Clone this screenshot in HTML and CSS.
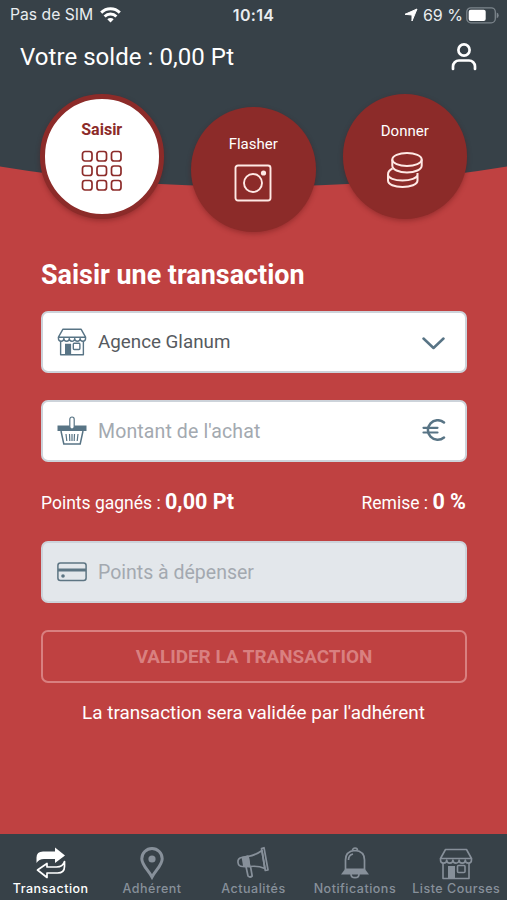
FILE: index.html
```html
<!DOCTYPE html>
<html lang="fr">
<head>
<meta charset="utf-8">
<meta name="viewport" content="width=device-width, initial-scale=1">
<title>Saisir une transaction</title>
<link rel="stylesheet" href="styles.css">
</head>
<body>
<svg class="defs" width="0" height="0" aria-hidden="true">
  <symbol id="shop" viewBox="0 0 34 32">
    <g fill="none" stroke="currentColor" stroke-width="1.600" stroke-linejoin="round">
      <path d="M6.500 1.500h21l5 9h-31z"/>
      <path d="M1.500 10.500v1.500a3.100 3.100 0 0 0 6.200 0a3.100 3.100 0 0 0 6.200 0a3.100 3.100 0 0 0 6.200 0a3.100 3.100 0 0 0 6.200 0a3.100 3.100 0 0 0 6.200 0v-1.500"/>
      <path d="M4 15v15.500h26V15"/>
      <rect x="18.500" y="17.500" width="7.500" height="7" rx="1"/>
    </g>
    <path d="M9 18h7v12H9z" fill="currentColor"/>
  </symbol>
</svg>
<div class="app">
  <header class="top">
    <div class="status">
      <div class="carrier"><span>Pas de SIM</span>
        <svg width="21" height="16" viewBox="0 0 21 16" fill="none" stroke="#fff" stroke-width="2.900"><path d="M1.200 5.600a13.200 13.200 0 0 1 18.600 0M4.600 9.400a8.300 8.300 0 0 1 11.800 0"/><path d="M10.500 15.500L7.300 12.300a4.500 4.500 0 0 1 6.400 0z" fill="#fff" stroke="none"/></svg>
      </div>
      <div class="clock">10:14</div>
      <div class="power">
        <svg width="14" height="14" viewBox="0 0 14 14"><path d="M13 1L8 13V7L1 6.300z" fill="#fff" stroke="#fff" stroke-linejoin="round"/></svg>
        <span>69 %</span>
        <svg width="33" height="17" viewBox="0 0 33 17"><rect x=".8" y=".8" width="28.500" height="15" rx="4" fill="none" stroke="#7c858c" stroke-width="1.300"/><rect x="2.700" y="2.700" width="17" height="11.200" rx="2" fill="#fff"/><path d="M30.700 5.500q2 .8 2 2.900t-2 2.900z" fill="#7c858c"/></svg>
      </div>
    </div>
    <div class="balance">
      <h1>Votre solde : 0,00 Pt</h1>
      <svg width="28" height="30" viewBox="0 0 28 30" fill="none" stroke="#fff" stroke-width="2.700" stroke-linecap="round"><circle cx="14" cy="8" r="5.600"/><path d="M3 27v-2.500a6 6 0 0 1 6-6h10a6 6 0 0 1 6 6V27"/></svg>
    </div>
  </header>

  <section class="modes">
    <svg class="curve" viewBox="0 0 507 22" preserveAspectRatio="none"><path d="M0 0V1.500Q120 21.500 253.500 21.500T507 1.500V0z" fill="#374148"/></svg>
    <button class="mode active"><span>Saisir</span>
      <svg width="42" height="42" viewBox="0 0 42 42" fill="none" stroke="#8c2b29" stroke-width="1.700"><rect x="1.500" y="1.500" width="9.500" height="9.500" rx="2.500"/><rect x="16" y="1.500" width="9.500" height="9.500" rx="2.500"/><rect x="30.500" y="1.500" width="9.500" height="9.500" rx="2.500"/><rect x="1.500" y="16" width="9.500" height="9.500" rx="2.500"/><rect x="16" y="16" width="9.500" height="9.500" rx="2.500"/><rect x="30.500" y="16" width="9.500" height="9.500" rx="2.500"/><rect x="1.500" y="30.500" width="9.500" height="9.500" rx="2.500"/><rect x="16" y="30.500" width="9.500" height="9.500" rx="2.500"/><rect x="30.500" y="30.500" width="9.500" height="9.500" rx="2.500"/></svg>
    </button>
    <button class="mode low"><span>Flasher</span>
      <svg width="38" height="38" viewBox="0 0 38 38" fill="none" stroke="#ffe9e5" stroke-width="1.900"><rect x="1.500" y="1.500" width="35" height="35" rx="2.500"/><circle cx="19" cy="19" r="9"/><circle cx="29.500" cy="9" r="2.600" fill="#ffe9e5" stroke="none"/></svg>
    </button>
    <button class="mode"><span>Donner</span>
      <svg width="38" height="38" viewBox="0 0 38 38" fill="none" stroke="#ffe9e5" stroke-width="2"><path d="M6.500 17.500C3.500 19 2 21 2 23.500c0 3.500 6.500 6 14.500 6s15-2.500 15-6V22M2 23.500v6c0 4 6.500 6.500 14.500 6.500s15-2.500 15-6.500v-6"/><ellipse cx="21" cy="8.500" rx="14.700" ry="6.500"/><path d="M6.300 8.500v6c0 4 6.500 7 14.700 7s14.700-3 14.700-7v-6"/></svg>
    </button>
  </section>

  <main class="form">
    <h2>Saisir une transaction</h2>
    <div class="field">
      <svg class="lead" width="30" height="28"><use href="#shop"/></svg>
      <span class="value">Agence Glanum</span>
      <svg width="24" height="24" viewBox="0 0 24 24" fill="none" stroke="#587485" stroke-width="2.500" stroke-linecap="round" stroke-linejoin="round"><path d="M1.500 8.500l10 9.500L21.500 8.500"/></svg>
    </div>
    <div class="field">
      <svg class="lead" width="30" height="30" viewBox="0 0 30 30"><path d="M.5 9.500h29v5.500H.5z" fill="#587485"/><path d="M4 15l2.800 13h16.400L26 15" fill="#fff" stroke="#587485" stroke-width="1.500"/><path d="M9 18l.8 7M12.500 18l.3 7M15 18v7M17.500 18l-.3 7M21 18l-.8 7" stroke="#587485" stroke-width="1.200"/><rect x="12.800" y="1" width="4.400" height="12" rx="2.200" fill="#fff" stroke="#587485" stroke-width="1.200"/></svg>
      <span class="value hint amount">Montant de l'achat</span>
      <svg width="24" height="24" viewBox="0 0 24 24" fill="none" stroke="#587485" stroke-width="2.500" stroke-linecap="round"><path d="M22 3.500A9.800 9.800 0 1 0 22 18.500"/><path d="M1.500 8.800H15.500M1.500 13.500H15.500" stroke-width="2.200"/></svg>
    </div>
    <div class="totals">
      <div>Points gagnés : <b>0,00 Pt</b></div>
      <div>Remise : <b>0 %</b></div>
    </div>
    <div class="field disabled">
      <svg class="lead" width="30" height="20" viewBox="0 0 30 20"><rect x=".9" y="1" width="28.200" height="17.500" rx="2.500" fill="none" stroke="#5d7583" stroke-width="1.500"/><path d="M1 6.500h28v3H1z" fill="#5d7583"/><circle cx="6" cy="14" r="1.800" fill="#5d7583"/></svg>
      <span class="value hint">Points à dépenser</span>
    </div>
    <button class="submit"><span>VALIDER LA TRANSACTION</span></button>
    <p class="note">La transaction sera validée par l'adhérent</p>
  </main>

  <nav class="tabs">
    <a class="tab current">
      <svg width="34" height="34" viewBox="0 0 34 34"><path d="M2.500 17V11.500Q2.500 5.500 9 5.500H21V1.500L31 9.500L21 17V13H10Q5 13 2.500 17z" fill="#fff"/><path d="M30.500 15.500v5q0 6.500-7 6.500H13v4.500L3.500 24l9.500-6.500V21h9.500q6.500 0 8-5.500z" fill="none" stroke="#fff" stroke-width="1.700" stroke-linejoin="round"/></svg>
      <span>Transaction</span></a>
    <a class="tab">
      <svg width="34" height="34" viewBox="0 0 34 34" fill="none" stroke="currentColor"><path d="M17 31C13.500 24.500 6.800 19 6.800 12.700a10.200 10.200 0 0 1 20.400 0C27.200 19 20.500 24.500 17 31z" stroke-width="3"/><circle cx="17" cy="13" r="3.600" fill="currentColor" stroke="none"/></svg>
      <span>Adhérent</span></a>
    <a class="tab">
      <svg width="34" height="34" viewBox="0 0 34 34" fill="none" stroke="currentColor" stroke-width="1.700" stroke-linejoin="round"><path d="M12 10.500Q20 9 26 4.500L28.800 22.500Q22 19.500 13.500 20.500z"/><path d="M25.500 2.500l2.500-.8 4 22.300-2.700.5z"/><path d="M11.500 10.500L5.500 11.500Q1.500 12.500 2 16.500T6.500 20.500L13 20.500z"/><path d="M6.500 11.500l5.500-1.300 1.700 10.300H8z" fill="currentColor"/><path d="M10 20.500l2 9.500q2 2 4.200 0L14.500 20.500"/></svg>
      <span>Actualités</span></a>
    <a class="tab">
      <svg width="34" height="34" viewBox="0 0 34 34" fill="none" stroke="currentColor" stroke-width="1.700"><path d="M7.500 24V14Q7.500 5 17 4.500Q26.500 5 26.500 14V24"/><path d="M14.500 4.500a2.500 2.500 0 0 1 5 0M10.500 14Q10.500 9 15 8"/><path d="M7.500 22.500h19l4.500 6H3z" fill="currentColor" stroke="none"/><path d="M13 28q0 3.700 4 3.700t4-3.700"/></svg>
      <span>Notifications</span></a>
    <a class="tab">
      <svg width="34" height="34"><use href="#shop" y="2" width="34" height="32"/></svg>
      <span>Liste Courses</span></a>
  </nav>
</div>
</body>
</html>
```
FILE: styles.css
```css
* { box-sizing: border-box; }
body { margin: 0; background: #bf4141; font-family: Roboto, "Liberation Sans", sans-serif; color: #fff; }
h1, h2, p { margin: 0; }
button { font: inherit; color: inherit; }
svg { display: block; flex: none; }
.defs { position: absolute; }
.app { width: 507px; height: 900px; display: flex; flex-direction: column; overflow: hidden; }
.top { height: 94px; background: #374148; flex: none; }
.status { height: 30px; padding: 0 8px 0 10px; display: grid; grid-template-columns: 1fr auto 1fr; align-items: center; font-family: Inter, "Liberation Sans", sans-serif; font-size: 16px; line-height: 30px; color: #e9edf0; }
.carrier, .power { display: flex; align-items: center; }
.carrier { gap: 7px; }
.carrier span { font-size: 15.700px; }
.clock { font-weight: 600; letter-spacing: .3px; margin-right: 2px; }
.power { justify-content: flex-end; gap: 5px; }
.power span { margin-right: -2px; }
.balance { height: 54px; display: flex; align-items: center; justify-content: space-between; padding: 0 29px 0 20px; }
h1 { font-size: 24px; font-weight: 400; line-height: 30px; letter-spacing: .05px; }
.modes { height: 154px; flex: none; position: relative; display: flex; justify-content: space-between; padding: 0 40px 0 39.500px; background: linear-gradient(#374148 71px, #bf4141 71px); }
.curve { position: absolute; left: 0; top: 71px; width: 100%; height: 22px; }
.mode { position: relative; width: 124.500px; height: 124.500px; border: 0; border-radius: 50%; background: #8c2b29; padding: 28px 0 0; display: flex; flex-direction: column; align-items: center; gap: 11px; font-size: 15px; line-height: 18px; box-shadow: 0 2px 5px rgba(80, 15, 15, .35); }
.mode.active { background: #fff; border: 5px solid #8c2b29; color: #8c2b29; font-size: 16px; font-weight: 700; padding-top: 22px; }
.low { margin-top: 13px; }
.form { flex: 1; padding: 12px 41px 0; display: flex; flex-direction: column; }
h2 { font-size: 26.900px; line-height: 30px; font-weight: 700; margin-bottom: 21px; }
.field { width: 426px; height: 62px; border: 2px solid #cdd3da; border-radius: 7px; background: #fff; display: flex; align-items: center; gap: 11px; padding: 0 19px 0 14px; color: #587485; font-size: 18.800px; margin-bottom: 27px; }
.value { flex: 1; color: #565a60; }
.hint { color: #a3a9b0; font-size: 19.500px; }
.amount { letter-spacing: .12px; }
.totals { display: flex; justify-content: space-between; align-items: baseline; height: 28px; line-height: 28px; font-size: 17.500px; margin: -1px 0 25px; }
.totals b { font-size: 21.500px; }
.disabled { background: #e3e7eb; }
.submit { width: 426px; height: 53px; border: 2px solid #d98080; border-radius: 7px; background: transparent; padding: 0; font-size: 18.900px; font-weight: 700; color: #d98080; }
.note { text-align: center; font-size: 18.900px; line-height: 24px; margin-top: 18px; white-space: nowrap; }
.tabs { height: 66px; flex: none; background: #374148; display: grid; grid-template-columns: repeat(5, 1fr); padding-top: 12px; }
.tab { display: flex; flex-direction: column; align-items: center; color: #87909a; font: 500 12.500px/17px Inter, "Liberation Sans", sans-serif; letter-spacing: .5px; white-space: nowrap; }
.current { color: #fff; }
```
